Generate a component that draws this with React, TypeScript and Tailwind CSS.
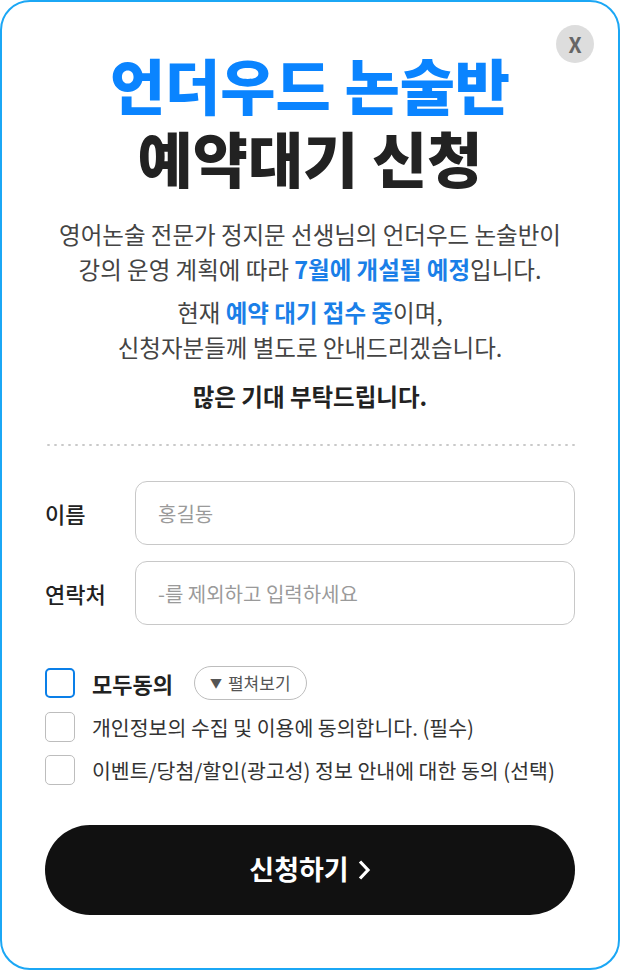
import React from "react";

const font = { fontFamily: '"Noto Sans CJK KR", "Noto Sans", sans-serif' };

const Checkbox = ({ active }: { active?: boolean }) => (
  <span
    className={
      active
        ? "w-[30px] h-[30px] rounded-[5px] border-2 border-[#0a7fe8] bg-white shrink-0"
        : "w-[30px] h-[30px] rounded-[5px] border border-[#bdbdbd] bg-white shrink-0"
    }
  />
);

export default function App() {
  return (
    <div style={font} className="w-[620px] h-[970px] bg-white">
      <div className="relative w-full h-full border-2 border-[#1ba7f5] rounded-[30px] px-[43px]">
        <button className="absolute top-[23px] right-[24px] w-[38px] h-[38px] rounded-full bg-[#dddddd] text-[#666] text-[21px] font-bold leading-none flex items-center justify-center">
          X
        </button>

        <div className="pt-[45px] text-center font-black text-[60px] leading-[73px]">
          <div className="text-[#0a84ff]">언더우드 논술반</div>
          <div className="text-[#222]">예약대기 신청</div>
        </div>

        <div className="mt-[24px] text-center text-[23.5px] leading-[35px] text-[#444]">
          <p>
            영어논술 전문가 정지문 선생님의 언더우드 논술반이
            <br />
            강의 운영 계획에 따라 <span className="text-[#1a7fe8] font-semibold">7월에 개설될 예정</span>입니다.
          </p>
          <p className="mt-[8px]">
            현재 <span className="text-[#1a7fe8] font-semibold">예약 대기 접수 중</span>이며,
            <br />
            신청자분들께 별도로 안내드리겠습니다.
          </p>
          <p className="mt-[14px] font-bold text-[#222]">많은 기대 부탁드립니다.</p>
        </div>

        <div className="mt-[30px] h-[2px] bg-[radial-gradient(circle,#c9c9c9_1px,transparent_1.4px)] bg-[length:7px_2px]" />

        <div className="mt-[35px] flex flex-col gap-[16px]">
          <div className="flex items-center">
            <span className="w-[90px] text-[22px] font-medium text-[#222]">이름</span>
            <input
              placeholder="홍길동"
              className="flex-1 h-[64px] rounded-[12px] border border-[#c8c8c8] px-[22px] text-[20px] placeholder-[#9a9a9a] outline-none"
            />
          </div>
          <div className="flex items-center">
            <span className="w-[90px] text-[22px] font-medium text-[#222]">연락처</span>
            <input
              placeholder="-를 제외하고 입력하세요"
              className="flex-1 h-[64px] rounded-[12px] border border-[#c8c8c8] px-[22px] text-[20px] placeholder-[#9a9a9a] outline-none"
            />
          </div>
        </div>

        <div className="mt-[41px] flex flex-col gap-[12px]">
          <div className="flex items-center">
            <Checkbox active />
            <span className="ml-[17px] text-[22px] font-bold text-[#222]">모두동의</span>
            <span className="ml-[21px] h-[34px] px-[15px] rounded-full border border-[#bdbdbd] flex items-center gap-[6px] text-[17px] text-[#555]">
              <span className="text-[12px]">▼</span>
              펼쳐보기
            </span>
          </div>
          <div className="flex items-center">
            <Checkbox />
            <span className="ml-[17px] text-[20.5px] text-[#333]">개인정보의 수집 및 이용에 동의합니다. (필수)</span>
          </div>
          <div className="flex items-center">
            <Checkbox />
            <span className="ml-[17px] text-[20.5px] text-[#333]">이벤트/당첨/할인(광고성) 정보 안내에 대한 동의 (선택)</span>
          </div>
        </div>

        <button className="mt-[39px] w-full h-[90px] rounded-full bg-[#111] text-white text-[27px] font-bold flex items-center justify-center gap-[8px]">
          신청하기
          <svg width="14" height="22" viewBox="0 0 14 22" fill="none">
            <path d="M3 2.5l8 8.5-8 8.5" stroke="white" strokeWidth="3.2" />
          </svg>
        </button>
      </div>
    </div>
  );
}
